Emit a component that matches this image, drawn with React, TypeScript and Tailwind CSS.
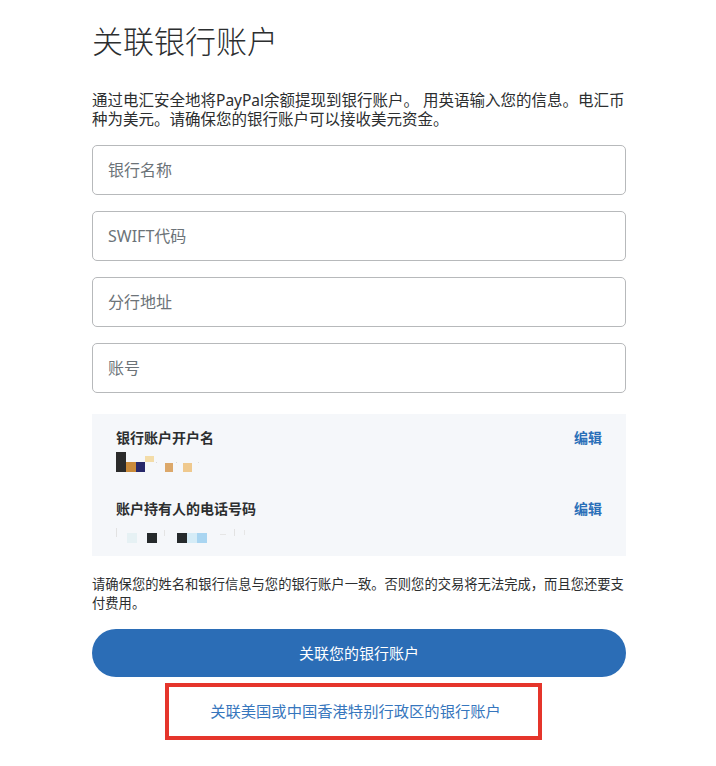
const font = {
  fontFamily: '"Noto Sans", "Noto Sans CJK SC", sans-serif',
};

function Field({ placeholder }: { placeholder: string }) {
  return (
    <input
      type="text"
      placeholder={placeholder}
      className="block h-[50px] w-full rounded-[5px] border border-[#b7b9bb] bg-white px-[15px] text-[16px] text-[#2c2e2f] placeholder:text-[#6c7378] focus:outline-none"
    />
  );
}

// blurred account holder name (pixelated in the screenshot)
function BlurName() {
  return (
    <svg width="90" height="20" viewBox="0 0 90 20" className="mt-[4px] block">
      <rect x="0" y="0" width="10" height="20" fill="#2b2b2b" />
      <rect x="10" y="10" width="10" height="10" fill="#c98a3a" />
      <rect x="20" y="10" width="9" height="10" fill="#27286a" />
      <rect x="29" y="4" width="9" height="6" fill="#f3dca8" />
      <rect x="49" y="11" width="8" height="9" fill="#dca86a" />
      <rect x="67" y="11" width="9" height="9" fill="#efc98e" />
      <rect x="40" y="10" width="1" height="1" fill="#d8d8d8" />
      <rect x="60" y="10" width="1" height="1" fill="#d8d8d8" />
      <rect x="82" y="10" width="1" height="1" fill="#dddddd" />
    </svg>
  );
}

function BlurPhone() {
  return (
    <svg width="140" height="20" viewBox="0 0 140 20" className="mt-[7px] block">
      <rect x="0" y="2" width="1" height="9" fill="#e2e2e2" />
      <rect x="11" y="7" width="10" height="10" fill="#e6f1f4" />
      <rect x="31" y="7" width="10" height="10" fill="#262a2c" />
      <rect x="48" y="4" width="1" height="6" fill="#e4e4e4" />
      <rect x="61" y="7" width="10" height="10" fill="#262a2c" />
      <rect x="71" y="7" width="10" height="10" fill="#d5ecf7" />
      <rect x="81" y="7" width="10" height="10" fill="#a9d5f1" />
      <rect x="104" y="8" width="6" height="1" fill="#e6e6e6" />
      <rect x="118" y="3" width="1" height="7" fill="#e2e2e2" />
      <rect x="128" y="4" width="1" height="5" fill="#e6e6e6" />
    </svg>
  );
}

export default function App() {
  return (
    <div className="min-h-[766px] w-full bg-white" style={font}>
      <div className="ml-[92px] w-[534px] pt-[23px] text-[#2c2e2f]">
        <h1 className="text-[31px] font-light leading-[36px] text-[#2c2e2f]">关联银行账户</h1>

        <p className="mt-[32px] text-[15.5px] leading-[19px]">
          通过电汇安全地将PayPal余额提现到银行账户。 用英语输入您的信息。电汇币种为美元。请确保您的银行账户可以接收美元资金。
        </p>

        <div className="mt-[16px] flex flex-col gap-[16px]">
          <Field placeholder="银行名称" />
          <Field placeholder="SWIFT代码" />
          <Field placeholder="分行地址" />
          <Field placeholder="账号" />
        </div>

        <div className="mt-[21px] bg-[#f5f7fa] px-[24px] pb-[10px] pt-[14px]">
          <div className="flex items-start justify-between">
            <div>
              <div className="text-[14px] font-bold leading-[20px]">银行账户开户名</div>
              <BlurName />
            </div>
            <a className="text-[14px] font-bold leading-[20px] text-[#2a6fb8]">编辑</a>
          </div>
          <div className="mt-[27px] flex items-start justify-between">
            <div>
              <div className="text-[14px] font-bold leading-[20px]">账户持有人的电话号码</div>
              <BlurPhone />
            </div>
            <a className="text-[14px] font-bold leading-[20px] text-[#2a6fb8]">编辑</a>
          </div>
        </div>

        <p className="mt-[19px] text-[13.3px] leading-[19px]">
          请确保您的姓名和银行信息与您的银行账户一致。否则您的交易将无法完成，而且您还要支付费用。
        </p>

        <button className="mt-[16px] flex h-[48px] w-full items-center justify-center rounded-full bg-[#2b6db6] text-[15px] text-white">
          关联您的银行账户
        </button>

        <div className="ml-[73px] mt-[6px] flex h-[57px] w-[377px] items-center justify-center border-[4px] border-[#e5352b] pl-[4px]">
          <a className="text-[15.3px] text-[#3676bd]">关联美国或中国香港特别行政区的银行账户</a>
        </div>
      </div>
    </div>
  );
}
